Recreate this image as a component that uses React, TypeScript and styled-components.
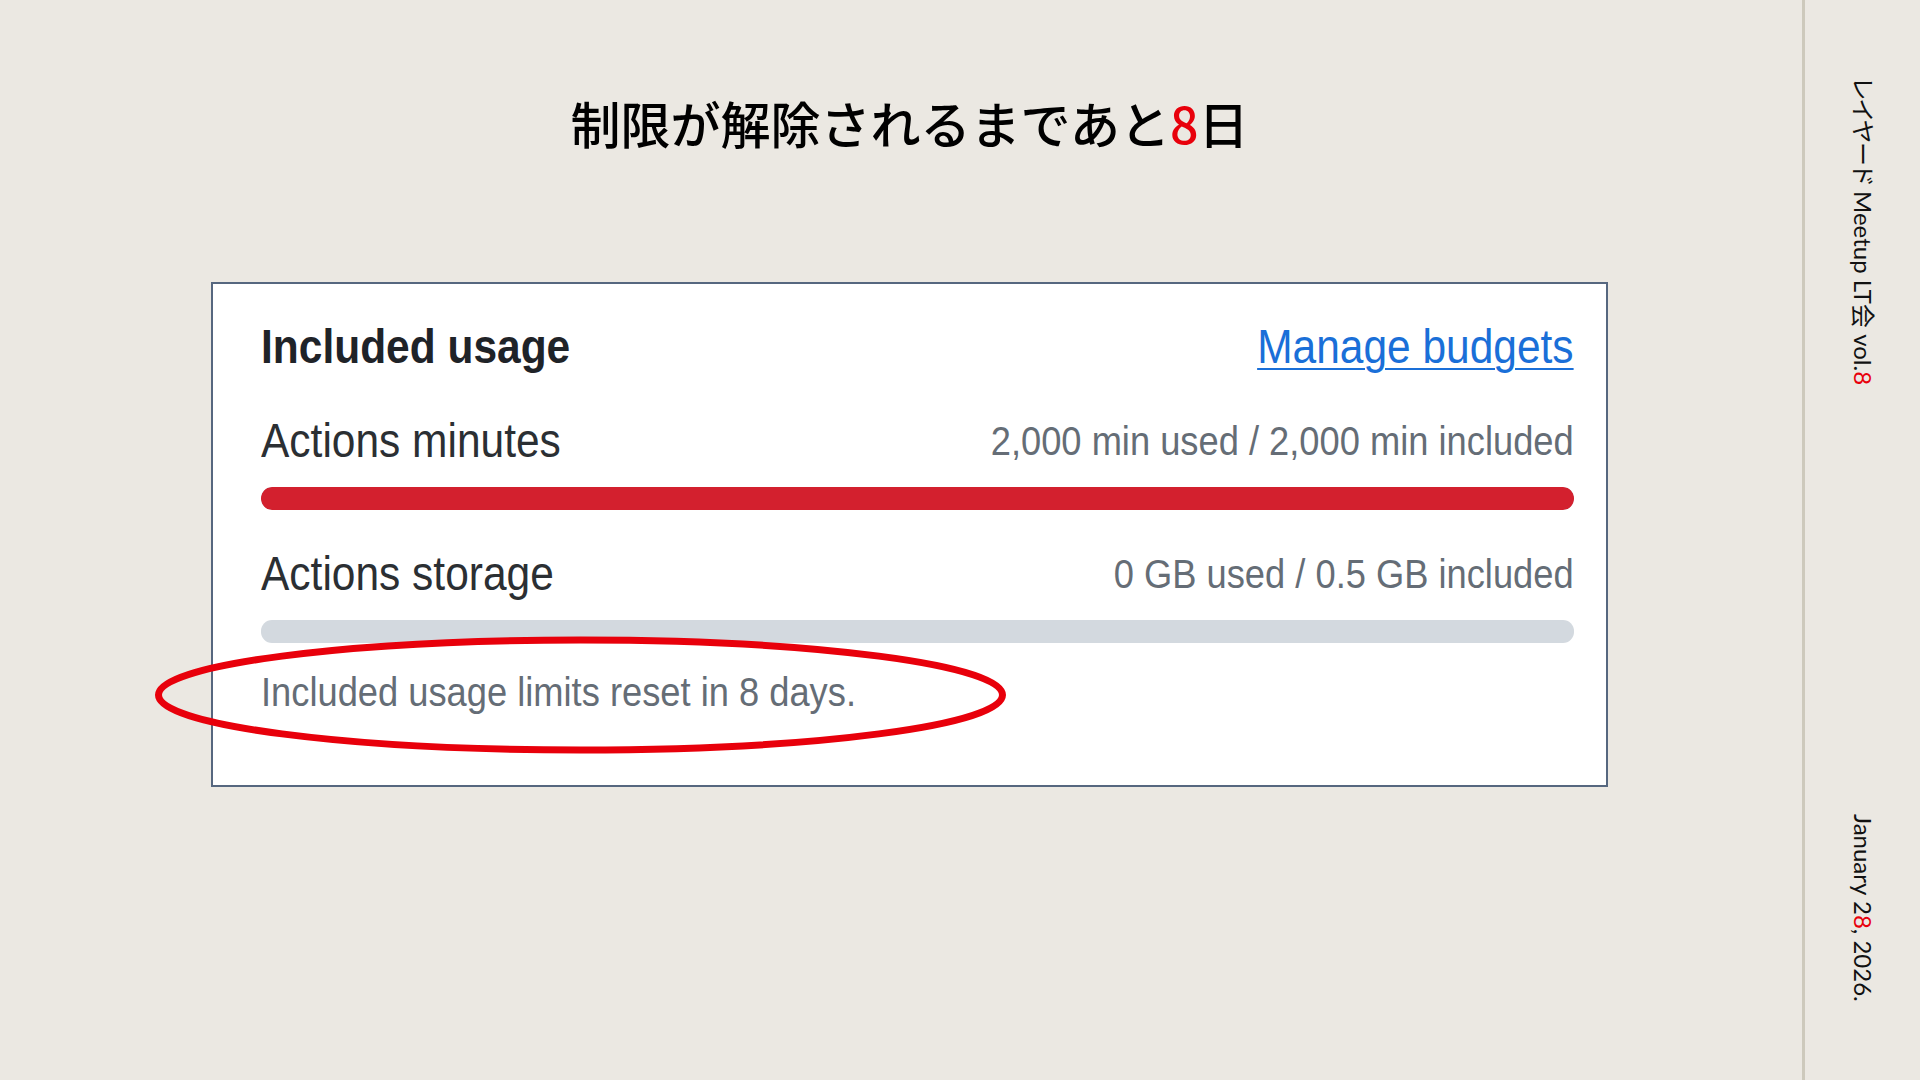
import React from 'react';
import styled, { createGlobalStyle } from 'styled-components';

type Usage = {
  label: string;
  detail: string;
  percent: number;
};

const usages: Usage[] = [
  { label: 'Actions minutes', detail: '2,000 min used / 2,000 min included', percent: 100 },
  { label: 'Actions storage', detail: '0 GB used / 0.5 GB included', percent: 0 },
];

const App: React.FC = () => {
  return (
    <>
      <GlobalStyle />
      <Slide>
        <Main>
          <Content>
            <Title>
              制限が解除されるまであと<Red>8</Red>日
            </Title>

            <Card>
              <HeaderRow>
                <Heading>
                  <Squish $origin="left">Included usage</Squish>
                </Heading>
                <BudgetLink href="#">
                  <LinkText $origin="right">Manage budgets</LinkText>
                </BudgetLink>
              </HeaderRow>

              {usages.map((usage: Usage, index: number) => (
                <UsageBlock key={index}>
                  <UsageRow>
                    <UsageLabel>
                      <Squish $origin="left">{usage.label}</Squish>
                    </UsageLabel>
                    <UsageDetail>
                      <Squish $origin="right">{usage.detail}</Squish>
                    </UsageDetail>
                  </UsageRow>
                  <Track>
                    <Fill $full={usage.percent >= 100} style={{ width: `${usage.percent}%` }} />
                  </Track>
                </UsageBlock>
              ))}

              <Footnote>
                <Squish $origin="left">Included usage limits reset in 8 days.</Squish>
              </Footnote>

              <Circle width="853" height="118" viewBox="0 0 853 118">
                <ellipse cx="426.5" cy="59" rx="422" ry="55" fill="none" stroke="#e8000b" strokeWidth="7" />
              </Circle>
            </Card>
          </Content>
        </Main>

        <Sidebar>
          <SideText>
            レイヤード Meetup LT会 vol.<Red>8</Red>
          </SideText>
          <SideText>
            January 2<Red>8</Red>, 2026.
          </SideText>
        </Sidebar>
      </Slide>
    </>
  );
};

const GlobalStyle = createGlobalStyle`
  html, body {
    margin: 0;
    padding: 0;
  }

  body {
    background: #ebe8e2;
    font-family: "Liberation Sans", Arial, sans-serif;
  }
`;

const Slide = styled.div`
  display: flex;
  width: 1920px;
  height: 1080px;
  background: #ebe8e2;
  overflow: hidden;
`;

const Main = styled.main`
  width: 1802px;
  padding-top: 92px;
  box-sizing: border-box;
`;

const Content = styled.div`
  width: 1397px;
  margin-left: 211px;
  display: flex;
  flex-direction: column;
  align-items: center;
`;

const Title = styled.h1`
  margin: 0;
  font-family: "Noto Sans CJK JP", "Noto Sans", sans-serif;
  font-weight: 500;
  font-size: 50px;
  line-height: 60px;
  color: #000;
`;

const Red = styled.span`
  color: #e8000b;
`;

const Card = styled.section`
  position: relative;
  width: 1397px;
  height: 505px;
  margin-top: 130px;
  padding: 39px 32px 0 48px;
  box-sizing: border-box;
  background: #ffffff;
  border: 2px solid #56677f;
`;

const Squish = styled.span<{ $origin: 'left' | 'right' }>`
  display: inline-block;
  white-space: nowrap;
  transform: scaleX(0.885);
  transform-origin: ${(p) => p.$origin} center;
`;

const LinkText = styled(Squish)`
  text-decoration: underline;
  text-decoration-thickness: 2px;
  text-underline-offset: 5px;
`;

const HeaderRow = styled.div`
  display: flex;
  justify-content: space-between;
  align-items: center;
  height: 48px;
`;

const Heading = styled.h2`
  margin: 0;
  font-size: 48px;
  line-height: 48px;
  font-weight: 700;
  color: #1f2328;
`;

const BudgetLink = styled.a`
  font-size: 48px;
  line-height: 48px;
  color: #1a6fd8;
`;

const UsageBlock = styled.div`
  display: flex;
  flex-direction: column;
  margin-top: 46px;

  & + & {
    margin-top: 40px;
  }
`;

const UsageRow = styled.div`
  display: flex;
  justify-content: space-between;
  align-items: center;
  height: 48px;
`;

const UsageLabel = styled.span`
  font-size: 48px;
  line-height: 48px;
  color: #2b2f33;
`;

const UsageDetail = styled.span`
  font-size: 41px;
  line-height: 48px;
  color: #656d76;
`;

const Track = styled.div`
  height: 23px;
  margin-top: 22px;
  border-radius: 11px;
  background: #d3d9df;
  overflow: hidden;
`;

const Fill = styled.div<{ $full: boolean }>`
  height: 100%;
  border-radius: 11px;
  background: ${(p) => (p.$full ? '#d3202e' : '#2da44e')};
`;

const Footnote = styled.p`
  margin: 25px 0 0;
  font-size: 41px;
  line-height: 48px;
  color: #656d76;
`;

const Circle = styled.svg`
  position: absolute;
  left: -59px;
  top: 352px;
  pointer-events: none;
`;

const Sidebar = styled.aside`
  width: 118px;
  border-left: 3px solid #cdc9bc;
  box-sizing: border-box;
  display: flex;
  flex-direction: column;
  justify-content: space-between;
  align-items: center;
  padding: 78px 0 78px;
`;

const SideText = styled.div`
  writing-mode: vertical-rl;
  text-orientation: sideways;
  font-family: Lato, "Noto Sans CJK JP", sans-serif;
  font-feature-settings: "palt";
  font-size: 24px;
  line-height: 28px;
  color: #111;
  white-space: nowrap;
`;

export default App;
